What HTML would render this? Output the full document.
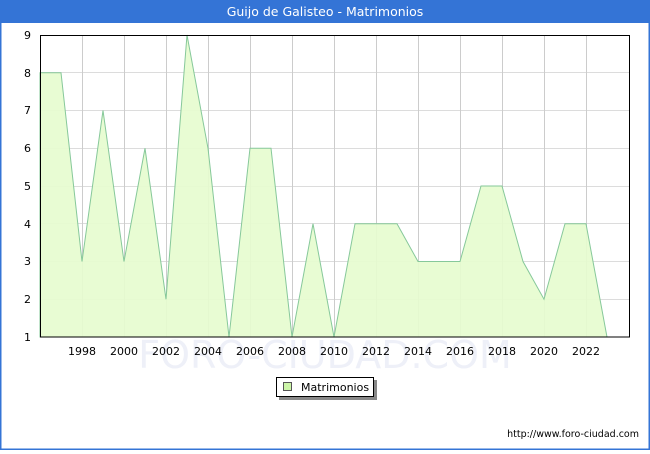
<!DOCTYPE html>
<html><head><meta charset="utf-8"><style>
body{margin:0;width:650px;height:450px;overflow:hidden;background:#fff;font-family:"DejaVu Sans","Liberation Sans",sans-serif;}
</style></head><body>
<svg width="650" height="450" xmlns="http://www.w3.org/2000/svg" font-family="DejaVu Sans, Liberation Sans, sans-serif">
<rect x="0" y="0" width="650" height="450" fill="#fff"/>
<rect x="0.5" y="0.5" width="649" height="449" fill="none" stroke="#3474d6" stroke-width="2"/>
<rect x="0" y="0" width="650" height="23" fill="#3474d6"/>
<text x="325" y="16" fill="#fff" font-size="12.5" text-anchor="middle">Guijo de Galisteo - Matrimonios</text>
<g stroke="#dcdcdc" stroke-width="1">
<line x1="40" x2="630" y1="299.5" y2="299.5"/><line x1="40" x2="630" y1="261.5" y2="261.5"/>
<line x1="40" x2="630" y1="223.5" y2="223.5"/><line x1="40" x2="630" y1="186.5" y2="186.5"/>
<line x1="40" x2="630" y1="148.5" y2="148.5"/><line x1="40" x2="630" y1="110.5" y2="110.5"/>
<line x1="40" x2="630" y1="72.5" y2="72.5"/>
</g>
<g stroke="#cccccc" stroke-width="1">
<line x1="82.5" x2="82.5" y1="35" y2="337"/><line x1="124.5" x2="124.5" y1="35" y2="337"/>
<line x1="166.5" x2="166.5" y1="35" y2="337"/><line x1="208.5" x2="208.5" y1="35" y2="337"/>
<line x1="250.5" x2="250.5" y1="35" y2="337"/><line x1="292.5" x2="292.5" y1="35" y2="337"/>
<line x1="334.5" x2="334.5" y1="35" y2="337"/><line x1="376.5" x2="376.5" y1="35" y2="337"/>
<line x1="418.5" x2="418.5" y1="35" y2="337"/><line x1="460.5" x2="460.5" y1="35" y2="337"/>
<line x1="502.5" x2="502.5" y1="35" y2="337"/><line x1="544.5" x2="544.5" y1="35" y2="337"/>
<line x1="586.5" x2="586.5" y1="35" y2="337"/>
</g>
<text x="325" y="368" font-size="38" fill="#eef0f8" text-anchor="middle">FORO-CIUDAD.COM</text>
<polygon fill="#e6fccf" fill-opacity="0.92" stroke="#86c89a" stroke-width="1" points="40,337 40,72.75 61,72.75 82,261.5 103,110.5 124,261.5 145,148.25 166,299.25 187,35 208,148.25 229,337 250,148.25 271,148.25 292,337 313,223.75 334,337 355,223.75 376,223.75 397,223.75 418,261.5 439,261.5 460,261.5 481,186 502,186 523,261.5 544,299.25 565,223.75 586,223.75 607,337"/>
<rect x="40.5" y="35.5" width="589" height="301.5" fill="none" stroke="#000" stroke-width="1"/>
<g font-size="11" fill="#000" text-anchor="end">
<text x="31" y="341">1</text><text x="31" y="303">2</text><text x="31" y="265">3</text>
<text x="31" y="228">4</text><text x="31" y="190">5</text><text x="31" y="152">6</text>
<text x="31" y="114">7</text><text x="31" y="77">8</text><text x="31" y="39">9</text>
</g>
<g font-size="11" fill="#000" text-anchor="middle">
<text x="82" y="355">1998</text><text x="124" y="355">2000</text><text x="166" y="355">2002</text>
<text x="208" y="355">2004</text><text x="250" y="355">2006</text><text x="292" y="355">2008</text>
<text x="334" y="355">2010</text><text x="376" y="355">2012</text><text x="418" y="355">2014</text>
<text x="460" y="355">2016</text><text x="502" y="355">2018</text><text x="544" y="355">2020</text>
<text x="586" y="355">2022</text>
</g>
<rect x="279" y="380" width="98" height="20" fill="#888"/>
<rect x="276.5" y="377.5" width="97" height="19" fill="#fff" stroke="#000" stroke-width="1"/>
<rect x="283.5" y="382.5" width="8" height="8" fill="#ccf5a8" stroke="#555" stroke-width="1"/>
<text x="301" y="391" font-size="11" fill="#000">Matrimonios</text>
<text x="639" y="437" font-size="9.5" fill="#000" text-anchor="end">http://www.foro-ciudad.com</text>
</svg>
</body></html>
